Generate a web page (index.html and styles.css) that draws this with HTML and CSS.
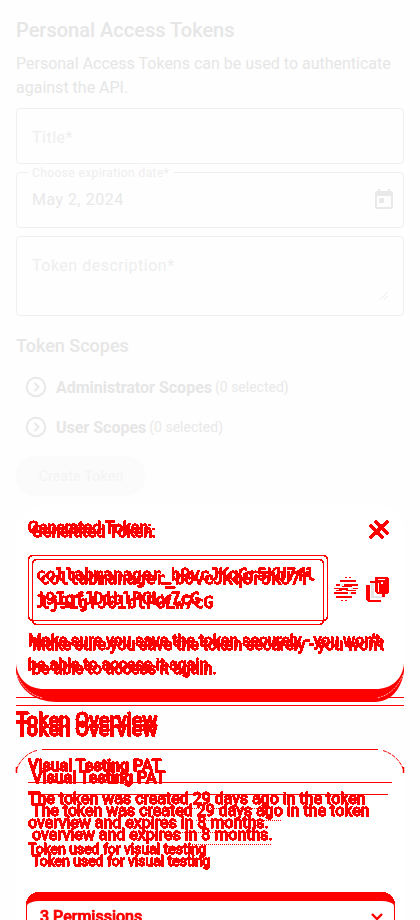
FILE: index.html
```
<!DOCTYPE html>
<html lang="en">
<head>
<meta charset="utf-8">
<title>Personal Access Tokens</title>
<link rel="stylesheet" href="styles.css">
</head>
<body>
<svg class="defs" width="0" height="0"><filter id="hard" color-interpolation-filters="sRGB" x="0" y="0" width="1" height="1"><feComponentTransfer><feFuncA type="discrete" tableValues="0 1 1 1 1 1 1"/></feComponentTransfer></filter></svg>
<main class="page">
  <section class="create">
    <h1>Personal Access Tokens</h1>
    <p class="intro">Personal Access Tokens can be used to authenticate against the API.</p>
    <div class="field">Title*</div>
    <fieldset class="field date"><legend>Choose expiration date*</legend><span>May 2, 2024</span>
      <svg width="24" height="24" viewBox="0 0 24 24"><path fill="#e9e9e9" d="M19 3h-1V1h-2v2H8V1H6v2H5a2 2 0 0 0-2 2v14c0 1.1.9 2 2 2h14a2 2 0 0 0 2-2V5a2 2 0 0 0-2-2zm0 16H5V8h14v11zM7 10h5v5H7z"/></svg>
    </fieldset>
    <div class="field area">Token description*
      <svg class="grip" width="8" height="8" viewBox="0 0 8 8"><path stroke="#e6e6e6" stroke-width=".8" d="M0 7.5 7.5 0M4 7.5 7.5 4"/></svg>
    </div>
    <h2>Token Scopes</h2>
    <div class="scope"><svg width="24" height="24" viewBox="0 0 24 24" fill="none" stroke="#e9e9e9" stroke-width="2"><circle cx="12" cy="12" r="9.3"/><path d="m10.5 8 4 4-4 4"/></svg><b>Administrator Scopes</b><span>(0 selected)</span></div>
    <div class="scope"><svg width="24" height="24" viewBox="0 0 24 24" fill="none" stroke="#e9e9e9" stroke-width="2"><circle cx="12" cy="12" r="9.3"/><path d="m10.5 8 4 4-4 4"/></svg><b>User Scopes</b><span>(0 selected)</span></div>
    <div class="create-button">Create Token</div>
  </section>

  <section class="stack token-card">
    <svg class="card-edge" width="390" height="56" viewBox="0 0 390 56">
      <path fill="red" d="M1 13C3 29 14 38 29 38H361C376 38 387 29 389 13V20C387 37 376 51 360 51H42C16 51 2 34 1 20z"/>
      <path fill="none" stroke="#fff" stroke-width=".7" stroke-dasharray="2 1" d="M2 24C8 38 18 45 28 47M388 24C382 38 372 45 362 47"/>
      <path stroke="red" d="M1 46.5H25M365 46.5H389M1 54.5H389"/>
    </svg>
    <div class="token first">
      <div class="token-head"><span>Generated Token:</span><svg width="15" height="15" viewBox="0 0 15 15"><path stroke="red" stroke-width="2.6" d="m1 1 13 13M14 1 1 14"/></svg></div>
      <div class="token-value">collabmanager_b9vcJKqGr5KU7fl<br>j9IgfJDiblPGLw7cG</div>
      <p>Make sure you save the token securely - you won't<br>be able to access it again.</p>
    </div>
    <div class="token second">
      <div class="token-head"><span>Generated Token:</span><svg width="15" height="15" viewBox="0 0 15 15"><path stroke="red" stroke-width="2.6" d="m1 1 13 13M14 1 1 14"/></svg></div>
      <div class="token-value">collabmanager_b0vcJKqGr5KU7f<br>lj9IgfJ0iblPGLw7cG</div>
      <p>Make sure you save the token securely - you won't<br>be able to access it again.</p>
    </div>
    <svg class="actions" width="60" height="28" viewBox="0 0 60 28" shape-rendering="crispEdges">
      <g fill="#e5e5e5"><path d="M7 7h2v2H7zM17 11h2v2h-2zM15 15h2v2h-2z"/></g>
      <path fill="red" d="M11 0h2v1h-2zM15 0h2v1h-2zM6 3h16v2H6zM2 7h4v2H2zM10 7h14v2H10zM8 9h10v1H8zM0 11h5v1H0zM5 11h9v2H5zM19 11h5v1h-5zM2 13h6v1H2zM12 13h10v1H12zM0 15h14v2H0zM17 15h5v2h-5zM2 19h16v2H2zM7 23h2v1H7zM11 23h2v1h-2z"/>
      <path fill="#e5e5e5" d="M37 6h3v13h11v2H37z"/>
      <path fill="red" d="M41 0h12l2 1v15l-2 1h-2v3h-3v-3h-5l-2-2V6h-5V4h5V1zM32 8h4v15h11v2H34l-2-2z"/>
      <path fill="#fff" d="M44 6h1v9h-1zM44 2h7v1h-7zM47 5h2v2h-2z"/>
    </svg>
  </section>

  <section class="stack overview">
    <h3 class="title-a">Token Overview</h3>
    <h3 class="title-b">Token Overview</h3>
    <svg width="14" height="20" viewBox="0 0 14 20"><path stroke="red" d="M0 .5h14M0 8.5h14"/></svg>
  </section>

  <section class="stack pat-card">
    <svg class="pat-edge" width="390" height="48" viewBox="0 0 390 48" fill="none" stroke="red">
      <path d="M27 .5H363"/><path stroke-dasharray="4 1" d="M22 1.5C14 3 5 10 1 22"/><path stroke-dasharray="4 1" d="M368 1.5C376 4 385 10 389 22"/>
      <path stroke-width="1.5" d="M1.5 18v6M388.5 18v6"/>
      <path d="M13 33.5H377M13 45.5H373"/>
    </svg>
    <div class="pat">
      <h4>Visual Testing PAT</h4>
      <p>The token was created <u>29 days ago</u> in the token<br>overview and expires <u>in 8 months.</u></p>
      <small>Token used for visual testing</small>
    </div>
    <div class="pat lower">
      <h4>Visual Testing PAT</h4>
      <p>The token was created <u>29 days ago</u> in the token<br>overview and expires <u>in 8 months.</u></p>
      <small>Token used for visual testing</small>
    </div>
    <div class="permissions"><span>3 Permissions</span><svg width="12" height="8" viewBox="0 0 12 8"><path fill="none" stroke="red" stroke-width="2.4" d="m1 1 5 5 5-5"/></svg></div>
  </section>
</main>
</body>
</html>
```
FILE: styles.css
```
* { box-sizing: border-box; }
body { margin: 0; background: #fefefe; font-family: Roboto, sans-serif; color: #e6e6e6; }
h1, h2, h3, h4, p { margin: 0; }
.defs { display: block; height: 0; }
.page { height: 920px; overflow: hidden; padding: 16px 16px 0; }
.create { height: 489px; }
h1 { font-size: 20px; line-height: 28px; font-weight: 500; }
.intro { margin-top: 8px; font-size: 16px; line-height: 24px; height: 56px; }
.field { height: 56px; margin: 0 0 8px; padding: 0 15px; border: 1px solid #f0f0f0; border-radius: 4px; font-size: 16px; line-height: 58px; letter-spacing: .5px; color: #eee; }
.date { height: 63px; margin: -7px 0 8px; padding: 0 7px 0 15px; display: flex; justify-content: space-between; color: #e9e9e9; }
.date legend { margin-left: -4px; padding: 1px 4px 0; font-size: 12px; line-height: 14px; letter-spacing: .4px; color: #eee; }
.date span { line-height: 40px; }
.date svg { margin-top: 8px; }
.area { height: 80px; display: flex; justify-content: space-between; }
.grip { margin: 55px 0 0; }
h2 { margin-top: 18px; font-size: 18px; line-height: 24px; font-weight: 500; margin-bottom: 9px; }
.scope { height: 40px; padding-left: 8px; display: flex; align-items: center; gap: 8px; font-size: 16px; color: #e9e9e9; }
.scope b { font-weight: 700; color: #e6e6e6; }
.scope span { margin-left: -5px; font-size: 14px; }
.create-button { width: 130px; height: 40px; margin-top: 9px; border-radius: 20px; background: #fbfbfb; color: #f3f3f3; font-size: 14px; line-height: 40px; letter-spacing: .25px; text-align: center; }
.stack { display: grid; color: red; -webkit-text-stroke: .75px red; }
.stack > * { grid-area: 1 / 1; }
.token, .overview, .pat, .permissions { filter: url(#hard); }
.token-card { height: 201px; background: #fff; border-radius: 28px 28px 0 0; }
.card-edge { align-self: start; margin: 146px 0 0 -1px; }
.token { padding: 11px 16px 0 12px; }
.second { padding: 15px 21px 0 16px; }
.token-head { height: 39px; display: flex; justify-content: space-between; font-size: 16px; line-height: 24px; }
.token-head svg { margin-top: 4px; }
.token-value { width: 300px; height: 66px; padding: 7px; border: 1px solid red; border-radius: 4px; font: 16px/24px "DejaVu Sans Mono", monospace; white-space: nowrap; }
.second .token-value { width: 292px; }
.token p { margin-top: 8px; font-size: 16px; line-height: 24px; white-space: nowrap; }
.actions { margin: 72px 0 0 318px; }
.overview { height: 43px; }
.overview h3 { font-size: 20px; line-height: 28px; font-weight: 500; }
.title-b { padding-top: 9px; }
.overview svg { margin: 7px 0 0; }
.pat-card { height: 171px; background: #fff; border-radius: 28px 28px 0 0; align-items: start; }
.pat-edge { margin-left: -1px; }
.pat { padding: 5px 12px 0; }
.lower { padding: 17px 16px 0; }
.pat h4 { font-size: 16px; line-height: 24px; font-weight: 500; margin-bottom: 9px; }
.pat p { font-size: 16px; line-height: 24px; white-space: nowrap; }
.pat u { text-decoration: underline dotted 1px; text-underline-offset: 4px; }
.pat small { display: block; font-size: 14px; line-height: 20px; margin-top: 4px; }
.permissions { height: 60px; margin: 143px 10px 0; padding: 2px 11px 0 13px; border: 1px solid red; border-top: 9px solid red; border-radius: 14px 14px 0 0; display: flex; justify-content: space-between; font-size: 16px; line-height: 28px; font-weight: 500; background: #fff; }
.permissions svg { margin-top: 10px; }
```
